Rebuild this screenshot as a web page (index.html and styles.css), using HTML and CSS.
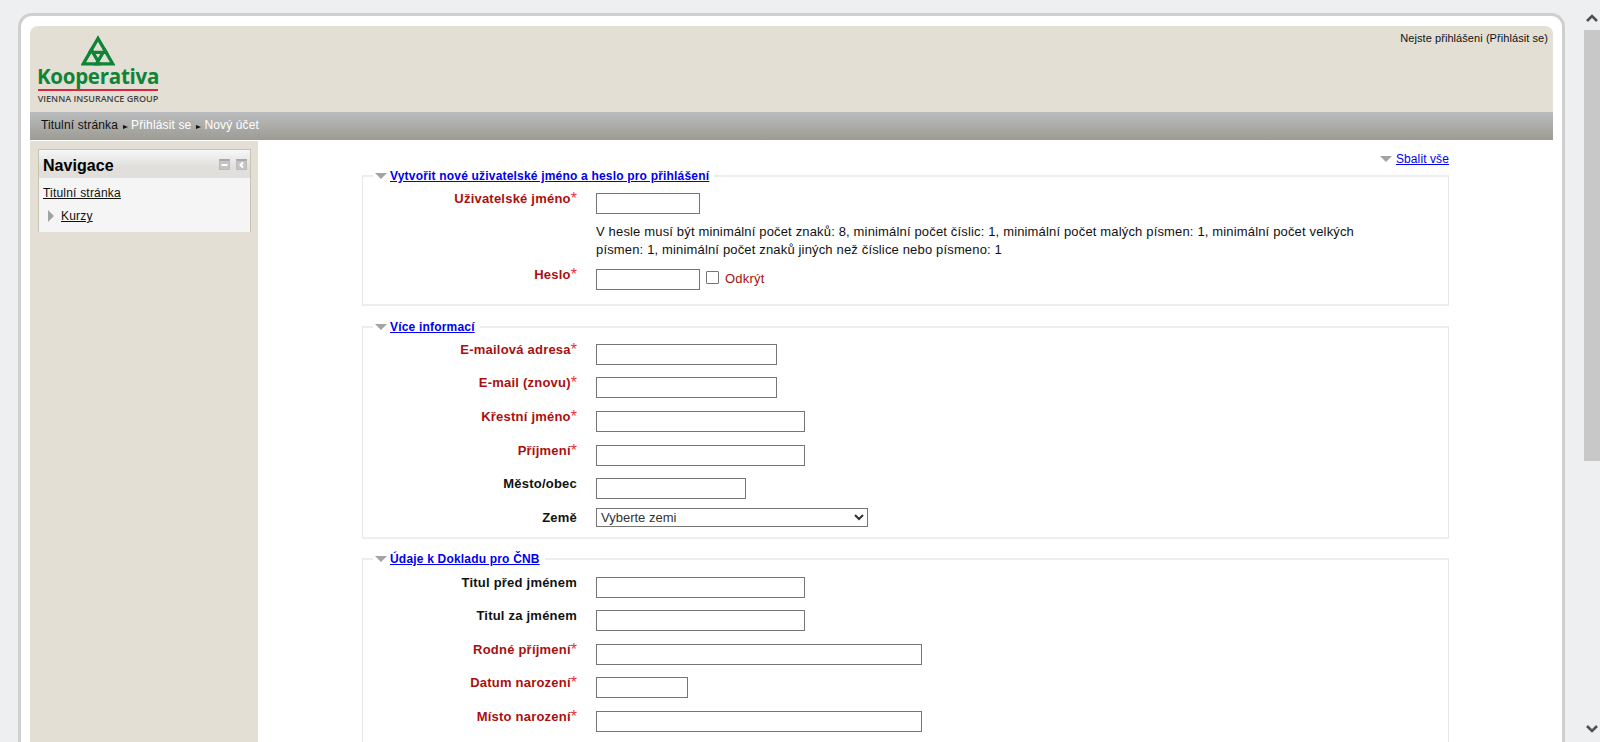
FILE: index.html
```html
<!DOCTYPE html>
<html lang="cs">
<head>
<meta charset="utf-8">
<title>Nový účet</title>
<link rel="stylesheet" href="styles.css">
</head>
<body>
<div class="viewport">
  <div class="page">
    <header class="head">
      <div class="logo">
        <svg class="logo-mark" viewBox="-17.600 -20.500 35.200 31" width="34" height="31">
          <defs>
            <path id="arm" d="M-9.120 -1.750 L0 -17.500 L8.360 -3.060 H-5.300"/>
          </defs>
          <g fill="none" stroke="#0f8437" stroke-width="3.400" stroke-linejoin="miter">
            <use href="#arm"/>
            <use href="#arm" transform="rotate(120)"/>
            <use href="#arm" transform="rotate(240)"/>
          </g>
        </svg>
        <div class="logo-name">Kooperativa</div>
        <div class="logo-rule"></div>
        <div class="logo-sub">VIENNA INSURANCE GROUP</div>
      </div>
      <div class="login">Nejste přihlášeni (Přihlásit se)</div>
    </header>
    <nav class="crumbs">
      <span class="crumb-first">Titulní stránka</span><span class="sep"></span><span>Přihlásit se</span><span class="sep"></span><span>Nový účet</span>
    </nav>
    <div class="columns">
      <aside class="side">
        <section class="block">
          <div class="block-head">
            <h2>Navigace</h2>
            <span class="blk-icon"><svg viewBox="0 0 9 8" width="9" height="8"><path d="M1.500 4H7.500" stroke="#fff" stroke-width="2"/></svg></span>
            <span class="blk-icon"><svg viewBox="0 0 9 8" width="9" height="8"><path d="M6 1.500 L3.500 4 L6 6.500" stroke="#fff" stroke-width="2" fill="none"/></svg></span>
          </div>
          <div class="block-body">
            <a class="nav-link" href="#">Titulní stránka</a>
            <div class="nav-sub"><span class="tri-right"></span><a href="#">Kurzy</a></div>
          </div>
        </section>
      </aside>
      <main class="main">
        <div class="collapse"><span class="tri-down"></span><a href="#">Sbalit vše</a></div>

        <fieldset class="group g1">
          <legend><span class="tri-down"></span><a href="#">Vytvořit nové uživatelské jméno a heslo pro přihlášení</a></legend>
          <div class="row"><label class="req">Uživatelské jméno<i>*</i></label><input class="w-s"></div>
          <p class="hint">V hesle musí být minimální počet znaků: 8, minimální počet číslic: 1, minimální počet malých písmen: 1, minimální počet velkých písmen: 1, minimální počet znaků jiných než číslice nebo písmeno: 1</p>
          <div class="row"><label class="req">Heslo<i>*</i></label><input class="w-s"><span class="box"></span><span class="reveal">Odkrýt</span></div>
        </fieldset>

        <fieldset class="group g2">
          <legend><span class="tri-down"></span><a href="#">Více informací</a></legend>
          <div class="row"><label class="req">E-mailová adresa<i>*</i></label><input class="w-m"></div>
          <div class="row"><label class="req">E-mail (znovu)<i>*</i></label><input class="w-m"></div>
          <div class="row"><label class="req">Křestní jméno<i>*</i></label><input class="w-l"></div>
          <div class="row"><label class="req">Příjmení<i>*</i></label><input class="w-l"></div>
          <div class="row"><label>Město/obec</label><input class="w-c"></div>
          <div class="row sel-row"><label>Země</label><select><option>Vyberte zemi</option></select></div>
        </fieldset>

        <fieldset class="group g3">
          <legend><span class="tri-down"></span><a href="#">Údaje k Dokladu pro ČNB</a></legend>
          <div class="row"><label>Titul před jménem</label><input class="w-l"></div>
          <div class="row"><label>Titul za jménem</label><input class="w-l"></div>
          <div class="row"><label class="req">Rodné příjmení<i>*</i></label><input class="w-x"></div>
          <div class="row"><label class="req">Datum narození<i>*</i></label><input class="w-d"></div>
          <div class="row"><label class="req">Místo narození<i>*</i></label><input class="w-x"></div>
        </fieldset>
      </main>
    </div>
  </div>
  <div class="scrollbar">
    <svg class="sb-arrow" viewBox="0 0 12 8" width="12" height="8"><path d="M1 7 L6 2 L11 7" fill="none" stroke="#505050" stroke-width="2.600"/></svg>
    <div class="thumb"></div>
    <svg class="sb-arrow sb-down" viewBox="0 0 12 8" width="12" height="8"><path d="M1 1 L6 6 L11 1" fill="none" stroke="#505050" stroke-width="2.600"/></svg>
  </div>
</div>
</body>
</html>
```
FILE: styles.css
```css
* { box-sizing: border-box; }
html, body { margin: 0; height: 100%; overflow: hidden; }
body { background: #eeeff1; font-family: "Liberation Sans", Arial, sans-serif; font-size: 13px; color: #111; }
.viewport { display: flex; height: 742px; overflow: hidden; }
.page {
  flex: none; width: 1547px; margin: 13px 0 0 18px; height: 760px;
  background: #fff; border: 3px solid #cfcfcf; border-bottom: 0;
  border-radius: 14px 14px 0 0; padding: 10px 9px 0; display: flex; flex-direction: column;
}
.head { height: 86px; flex: none; background: #e3dfd4; border-radius: 8px 8px 0 0; display: flex; justify-content: space-between; position: relative; }
.logo { width: 122px; margin-left: 7px; padding-top: 9px; display: flex; flex-direction: column; align-items: center; }
.logo-mark { display: block; flex: none; }
.logo-name { font-family: "Open Sans", sans-serif; font-weight: 700; font-size: 20.500px; line-height: 21px; letter-spacing: -0.25px; color: #0f8437; white-space: nowrap; }
.logo-rule { width: 120px; height: 2px; background: #d9263d; margin-top: 2px; flex: none; }
.logo-sub { font-family: "Open Sans", sans-serif; font-weight: 600; font-size: 9px; line-height: 10px; color: #444; margin-top: 3px; white-space: nowrap; }
.login { font-size: 11px; line-height: 13px; padding: 6px 5px 0 0; color: #111; letter-spacing: 0.07px; }
.crumbs { height: 28px; flex: none; background: linear-gradient(#babcbe, #9d9b93); color: #fff; font-size: 12px; line-height: 26px; padding-left: 11px; white-space: nowrap; letter-spacing: 0.14px; }
.crumb-first { color: #111; }
.sep { display: inline-block; border-left: 5px solid #111; border-top: 2.500px solid transparent; border-bottom: 2.500px solid transparent; margin: 0 3.500px 0 4.500px; vertical-align: 0; }
.columns { display: flex; flex: 1; min-height: 0; }
.side { flex: none; width: 228px; background: #e3dfd4; margin-top: 1px; padding: 8px 7px 0 8px; }
.block { border: 1px solid #c9c2b1; border-bottom: 0; height: 83px; background: #f5f5f5; }
.block-head { height: 28px; background: linear-gradient(#f6f7f9, #e0dfdc 60%); display: flex; align-items: center; padding: 0 3px 0 4px; }
.block-head h2 { margin: 3px auto 0 0; font-size: 16px; font-weight: 700; color: #000; letter-spacing: 0.05px; }
.blk-icon { width: 11px; height: 11px; margin-left: 6px; background: #c4c4c4; border: 1px solid #bbb; border-top: 2px solid #a8a8a8; display: flex; }
.blk-icon svg { display: block; width: 9px; height: 8px; }
.block-body { padding: 8px 4px; font-size: 12px; line-height: 14px; letter-spacing: 0.2px; }
.block-body a { color: #111; }
.nav-link { display: block; }
.nav-sub { display: flex; align-items: center; margin: 9px 0 0 5px; gap: 7px; }
.tri-right { border-left: 6px solid #a3a3a3; border-top: 6px solid transparent; border-bottom: 6px solid transparent; }
.main { flex: 1; min-width: 0; padding: 0 104px; position: relative; }
.main a { color: #0000ee; }
.tri-down { display: inline-block; border-top: 6px solid #a3a3a3; border-left: 6px solid transparent; border-right: 6px solid transparent; margin-right: 4px; vertical-align: 1px; }
legend .tri-down { margin-right: 3px; }
.collapse { position: absolute; right: 104px; top: 12px; font-size: 12px; line-height: 14px; letter-spacing: 0.1px; }
.group { margin: 0 0 14px; border: 1px solid #e6e6e6; border-top-width: 2px; border-bottom-width: 2px; border-color: #eeeeee #e6e6e6; padding: 0; min-width: 0; }
.g1 { margin-top: 29px; height: 137px; }
.g2 { height: 219px; margin-bottom: 13px; }
.g3 { height: 400px; }
legend { margin-left: 10px; padding: 0 5px 0 2px; font-size: 12px; font-weight: 700; line-height: 14px; letter-spacing: 0.19px; }
.row { display: flex; align-items: flex-start; height: 33.500px; }
.row label { width: 214px; flex: none; text-align: right; font-weight: 700; line-height: 15px; margin-top: -2px; color: #111; letter-spacing: 0.22px; }
.row label.req { color: #aa0f0f; }
.row label i { font-style: normal; color: #e6323c; font-weight: 400; font-size: 16px; line-height: 10px; letter-spacing: 0; vertical-align: -1px; }
.row input { height: 21px; margin: 0 0 0 19px; border: 1px solid #767676; background: #fff; padding: 0; flex: none; }
.g1 .row:first-of-type { margin-top: 10px; height: 30px; }
.g2 .row:first-of-type { margin-top: 10px; }
.g3 .row:first-of-type { margin-top: 10.500px; }
.g2 .row:nth-of-type(1), .g2 .row:nth-of-type(4) { height: 33px; }
.g2 .row:nth-of-type(2), .g2 .row:nth-of-type(3) { height: 34px; }
.w-s { width: 104px; }
.w-m { width: 181px; }
.w-l { width: 209px; }
.w-c { width: 150px; }
.w-d { width: 92px; }
.w-x { width: 326px; }
.hint { margin: 0 0 10px 233px; width: 770px; line-height: 18px; font-size: 13px; letter-spacing: 0.16px; color: #111; }
.box { width: 13px; height: 13px; border: 1px solid #767676; border-radius: 1px; margin: 2px 0 0 6px; }
.reveal { color: #aa0f0f; margin: 2px 0 0 6px; font-size: 13px; letter-spacing: 0.2px; }
.sel-row select { width: 272px; height: 19px; margin: -4px 0 0 19px; font: 13px "Liberation Sans", Arial, sans-serif; color: #333; background: #fff; border: 1px solid #767676; padding: 0; border-radius: 0; }
.scrollbar { margin-left: 18px; width: 17px; flex: none; display: flex; flex-direction: column; align-items: center; padding-top: 14px; height: 742px; }
.sb-arrow { flex: none; }
.thumb { width: 16px; height: 431px; margin: 8px 0 0 0; background: #c8c8c8; flex: none; align-self: flex-end; }
.sb-down { margin-top: auto; margin-bottom: 9px; }
```
